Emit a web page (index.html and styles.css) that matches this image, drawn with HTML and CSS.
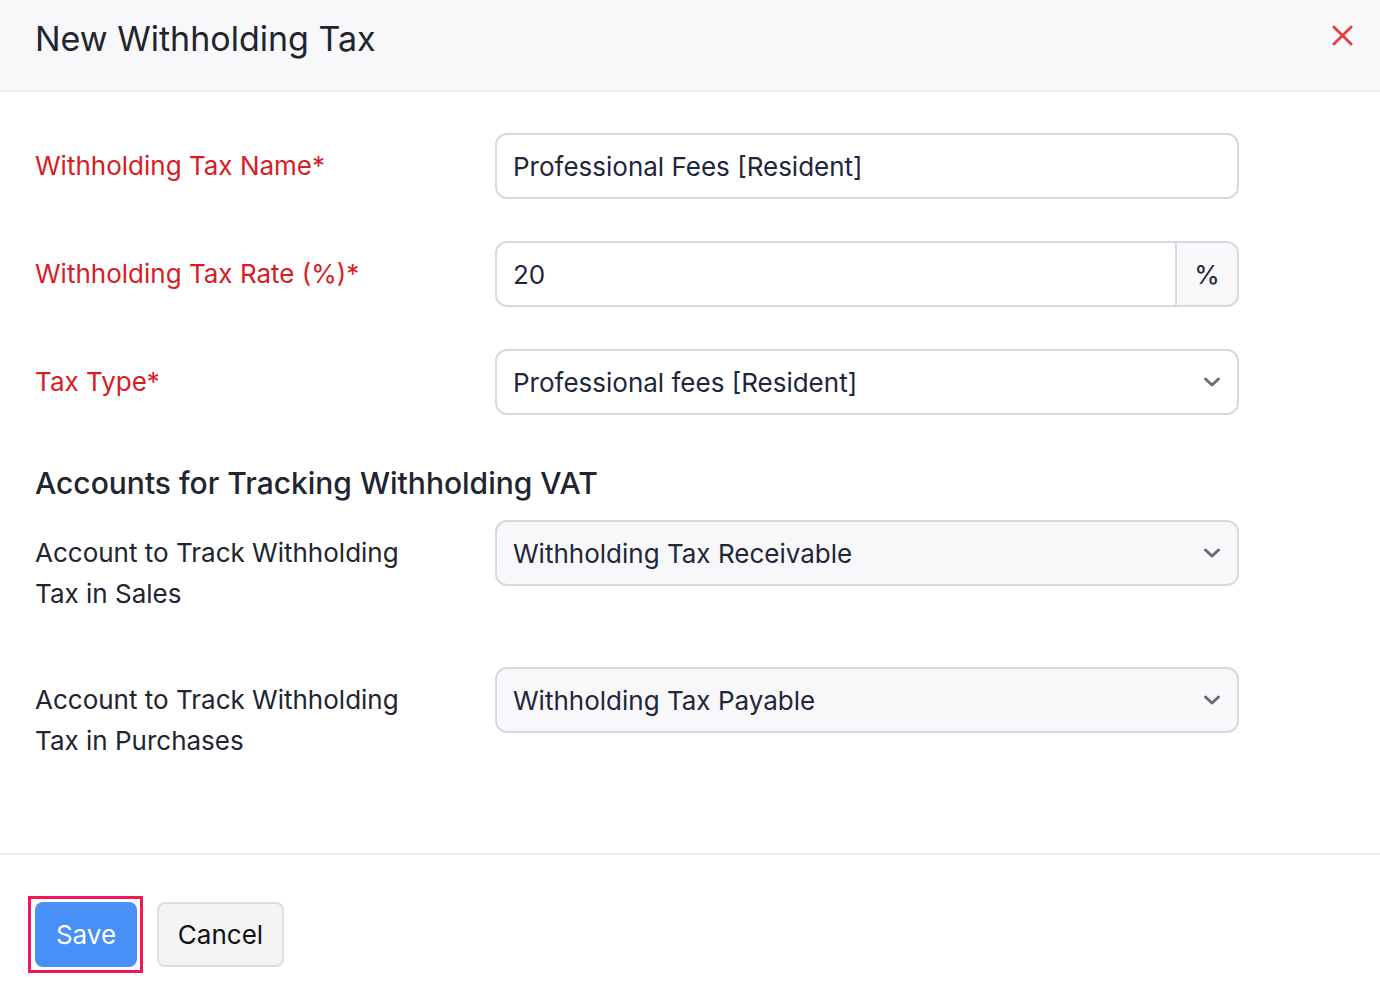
FILE: index.html
```html
<!DOCTYPE html>
<html lang="en">
<head>
<meta charset="utf-8">
<title>New Withholding Tax</title>
<link rel="stylesheet" href="styles.css">
</head>
<body>
<div class="modal">
  <header class="modal-header">
    <h1 class="modal-title">New Withholding Tax</h1>
    <button class="close-btn" type="button" aria-label="Close">
      <svg width="22" height="22" viewBox="0 0 22 22"><path d="M2 2L20 20M20 2L2 20" stroke="#e5403f" stroke-width="3" stroke-linecap="round"/></svg>
    </button>
  </header>
  <div class="modal-body">
    <div class="row">
      <label class="label required">Withholding Tax Name*</label>
      <div class="field"><div class="input">Professional Fees [Resident]</div></div>
    </div>
    <div class="row">
      <label class="label required">Withholding Tax Rate (%)*</label>
      <div class="field group">
        <div class="input input-grow">20</div>
        <div class="addon">%</div>
      </div>
    </div>
    <div class="row">
      <label class="label required">Tax Type*</label>
      <div class="field">
        <div class="input select">
          <span>Professional fees [Resident]</span>
          <svg class="chev" width="18" height="12" viewBox="0 0 18 12"><path d="M2.5 3L9 9L15.5 3" fill="none" stroke="#6b6b7a" stroke-width="3" stroke-linecap="round" stroke-linejoin="round"/></svg>
        </div>
      </div>
    </div>
    <h2 class="section-title">Accounts for Tracking Withholding VAT</h2>
    <div class="row row-account">
      <label class="label">Account to Track Withholding Tax in Sales</label>
      <div class="field">
        <div class="input select shaded">
          <span>Withholding Tax Receivable</span>
          <svg class="chev" width="18" height="12" viewBox="0 0 18 12"><path d="M2.5 3L9 9L15.5 3" fill="none" stroke="#6b6b7a" stroke-width="3" stroke-linecap="round" stroke-linejoin="round"/></svg>
        </div>
      </div>
    </div>
    <div class="row row-account last">
      <label class="label">Account to Track Withholding Tax in Purchases</label>
      <div class="field">
        <div class="input select shaded">
          <span>Withholding Tax Payable</span>
          <svg class="chev" width="18" height="12" viewBox="0 0 18 12"><path d="M2.5 3L9 9L15.5 3" fill="none" stroke="#6b6b7a" stroke-width="3" stroke-linecap="round" stroke-linejoin="round"/></svg>
        </div>
      </div>
    </div>
  </div>
  <footer class="modal-footer">
    <span class="highlight"><button class="btn btn-primary" type="button">Save</button></span>
    <button class="btn btn-secondary" type="button">Cancel</button>
  </footer>
</div>
</body>
</html>
```
FILE: styles.css
```css
* { box-sizing: border-box; }
html, body { margin: 0; padding: 0; background: #ffffff; }
body {
  font-family: Inter, "Noto Sans", "Liberation Sans", sans-serif;
  color: #21263a;
  -webkit-font-smoothing: antialiased;
}
.modal { width: 1380px; }
.modal-header {
  height: 92px;
  background: #f8f8fa;
  border-bottom: 2px solid #ececef;
  display: flex;
  align-items: flex-start;
  justify-content: space-between;
  padding: 0 27px 0 35px;
}
.modal-title {
  margin: 0;
  padding-top: 18px;
  font-size: 34px;
  line-height: 42px;
  font-weight: 400;
  color: #21252f;
}
.close-btn {
  margin-top: 25px;
  background: none;
  border: 0;
  padding: 0;
  width: 21px;
  height: 21px;
  cursor: pointer;
}
.close-btn svg { display: block; width: 21px; height: 21px; }
.modal-body {
  padding: 41px 35px 92px 35px;
}
.row {
  display: grid;
  grid-template-columns: 460px 744px;
  align-items: start;
  margin-bottom: 42px;
}
.row-account { margin-bottom: 53px; }
.row.last { margin-bottom: 0; }
.label {
  display: block;
  padding-top: 12px;
  font-size: 26px;
  line-height: 41px;
  color: #21252f;
  padding-right: 50px;
}
.label.required { color: #d91c24; }
.field { display: flex; }
.input {
  width: 100%;
  height: 66px;
  border: 2px solid #d8d8e2;
  border-radius: 12px;
  background: #ffffff;
  padding: 0 16px 0 16px;
  display: flex;
  align-items: center;
  font-size: 26px;
  color: #21263a;
}
.group .input-grow {
  flex: 1;
  border-top-right-radius: 0;
  border-bottom-right-radius: 0;
}
.addon {
  width: 62px;
  height: 66px;
  flex: none;
  border: 2px solid #d8d8e2;
  border-left: 0;
  border-radius: 0 12px 12px 0;
  background: #f8f8fa;
  display: flex;
  align-items: center;
  justify-content: center;
  font-size: 26px;
  color: #21263a;
}
.select { justify-content: space-between; }
.select .chev { flex: none; }
.shaded { background: #f8f8fb; }
.section-title {
  margin: 50px 0 19px 0;
  font-size: 30px;
  line-height: 36px;
  font-weight: 500;
  color: #21252f;
}
.modal-footer {
  border-top: 2px solid #ededef;
  padding: 41px 28px 30px;
  display: flex;
  align-items: center;
  gap: 14px;
}
.highlight {
  display: inline-flex;
  border: 3px solid #f2165a;
  padding: 3px 3px 3px 4px;
}
.btn {
  font-family: Inter, "Noto Sans", "Liberation Sans", sans-serif;
  font-size: 26px;
  height: 65px;
  border-radius: 8px;
  cursor: pointer;
  padding: 0;
}
.btn-primary {
  width: 102px;
  background: #4690f7;
  border: 0;
  color: #ffffff;
}
.btn-secondary {
  width: 127px;
  background: #f4f4f5;
  border: 2px solid #dedee2;
  color: #111111;
}
```
